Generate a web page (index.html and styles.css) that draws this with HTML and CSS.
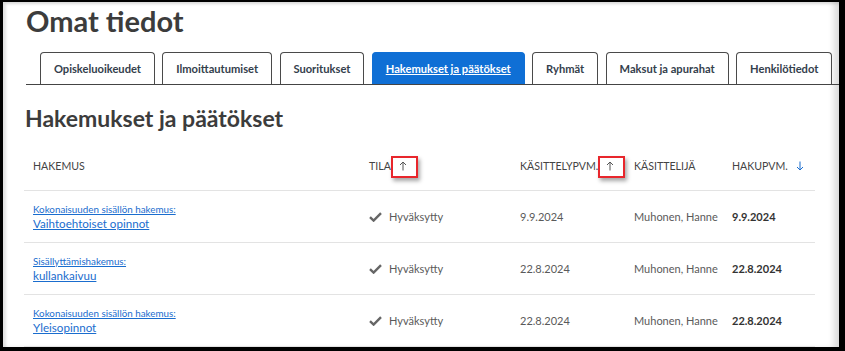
FILE: index.html
```html
<!DOCTYPE html>
<html lang="fi">
<head>
<meta charset="utf-8">
<title>Omat tiedot</title>
<link rel="stylesheet" href="styles.css">
</head>
<body>
<div class="frame">
  <h1 class="title">Omat tiedot</h1>
  <nav class="tabs">
    <a class="tab">Opiskeluoikeudet</a>
    <a class="tab">Ilmoittautumiset</a>
    <a class="tab">Suoritukset</a>
    <a class="tab active">Hakemukset ja päätökset</a>
    <a class="tab">Ryhmät</a>
    <a class="tab">Maksut ja apurahat</a>
    <a class="tab">Henkilötiedot</a>
  </nav>
  <h2 class="heading">Hakemukset ja päätökset</h2>
  <div class="table">
    <div class="row head">
      <div class="cell">HAKEMUS</div>
      <div class="cell">TILA<span class="sort marked"><svg viewBox="0 0 8 10" width="8" height="10"><path d="M4 9.5V1M1 4L4 1L7 4" fill="none" stroke="#555" stroke-width="1"/></svg></span></div>
      <div class="cell">KÄSITTELYPVM.<span class="sort marked"><svg viewBox="0 0 8 10" width="8" height="10"><path d="M4 9.5V1M1 4L4 1L7 4" fill="none" stroke="#555" stroke-width="1"/></svg></span></div>
      <div class="cell">KÄSITTELIJÄ</div>
      <div class="cell">HAKUPVM.<span class="sort"><svg viewBox="0 0 8 10" width="8" height="10"><path d="M4 0.5V9M1 6L4 9L7 6" fill="none" stroke="#1a6dce" stroke-width="1"/></svg></span></div>
    </div>
    <div class="row">
      <div class="cell app"><a class="kind">Kokonaisuuden sisällön hakemus:</a><a class="name">Vaihtoehtoiset opinnot</a></div>
      <div class="cell status"><svg class="check" viewBox="0 0 13 10" width="13" height="10"><path d="M1 5.2L4.6 8.6L12 1.2" fill="none" stroke="#666" stroke-width="2.4"/></svg>Hyväksytty</div>
      <div class="cell">9.9.2024</div>
      <div class="cell">Muhonen, Hanne</div>
      <div class="cell strong">9.9.2024</div>
    </div>
    <div class="row">
      <div class="cell app"><a class="kind">Sisällyttämishakemus:</a><a class="name">kullankaivuu</a></div>
      <div class="cell status"><svg class="check" viewBox="0 0 13 10" width="13" height="10"><path d="M1 5.2L4.6 8.6L12 1.2" fill="none" stroke="#666" stroke-width="2.4"/></svg>Hyväksytty</div>
      <div class="cell">22.8.2024</div>
      <div class="cell">Muhonen, Hanne</div>
      <div class="cell strong">22.8.2024</div>
    </div>
    <div class="row">
      <div class="cell app"><a class="kind">Kokonaisuuden sisällön hakemus:</a><a class="name">Yleisopinnot</a></div>
      <div class="cell status"><svg class="check" viewBox="0 0 13 10" width="13" height="10"><path d="M1 5.2L4.6 8.6L12 1.2" fill="none" stroke="#666" stroke-width="2.4"/></svg>Hyväksytty</div>
      <div class="cell">22.8.2024</div>
      <div class="cell">Muhonen, Hanne</div>
      <div class="cell strong">22.8.2024</div>
    </div>
  </div>
</div>
</body>
</html>
```

FILE: styles.css
```css
* { box-sizing: border-box; }
html, body { margin: 0; padding: 0; }
body {
  background: #000;
  font-family: Lato, "Open Sans", sans-serif;
  width: 845px;
  height: 351px;
  overflow: hidden;
}
.frame {
  margin: 2px 6px 0 3px;
  height: 345px;
  background: #fff;
  padding-left: 21px;
  overflow: hidden;
  box-shadow: inset 3px 2px 3px rgba(0,0,0,0.12), inset -7px 0 6px -2px rgba(0,0,0,0.14);
}
.title {
  margin: 2px 0 0 2px;
  font-size: 29px;
  line-height: 34px;
  font-weight: 700;
  color: #3c3c3c;
}
.tabs {
  margin: 14px 0 0 2px;
  padding-left: 14px;
  display: flex;
  gap: 7.5px;
  border-bottom: 1px solid #444;
  height: 33px;
}
.tab {
  flex-shrink: 0;
  white-space: nowrap;
  height: 32px;
  padding: 0 12.9px;
  display: flex;
  align-items: center;
  border: 1px solid #4a4a4a;
  border-bottom: none;
  border-radius: 4px 4px 0 0;
  font-size: 11.15px;
  font-weight: 700;
  color: #34404c;
}
.tab.active {
  background: #0f6fd5;
  border-color: #0f6fd5;
  color: #fff;
  text-decoration: underline;
}
.heading {
  margin: 19px 0 0 1px;
  font-size: 23px;
  line-height: 28px;
  font-weight: 700;
  color: #3c3c3c;
}
.table {
  width: 791px;
}
.row {
  display: grid;
  grid-template-columns: 336px 151px 114px 98px 1fr;
  align-items: center;
  height: 52px;
  border-bottom: 1px solid #e3e3e3;
}
.row.head {
  height: 59px;
  padding-top: 9px;
}
.cell {
  padding-left: 9px;
  font-size: 11px;
  color: #5a5a5a;
  display: flex;
  align-items: center;
  white-space: nowrap;
}
.head .cell {
  font-size: 10.6px;
  color: #444;
}
.strong {
  font-weight: 700;
  color: #333;
}
.app {
  flex-direction: column;
  align-items: flex-start;
}
.kind {
  font-size: 9.8px;
  line-height: 13px;
  color: #1a6dce;
  text-decoration: underline;
}
.name {
  font-size: 11.6px;
  line-height: 15px;
  color: #1a6dce;
  text-decoration: underline;
}
.check {
  margin-right: 7px;
}
.sort {
  position: relative;
  display: inline-flex;
  margin-left: 8px;
  width: 8px;
  height: 10px;
}
.sort.marked::after {
  content: "";
  position: absolute;
  left: -8px;
  top: -5px;
  width: 23px;
  height: 18px;
  border: 2px solid #e8262c;
  box-shadow: 2px 3px 4px rgba(0,0,0,0.35);
}
```
